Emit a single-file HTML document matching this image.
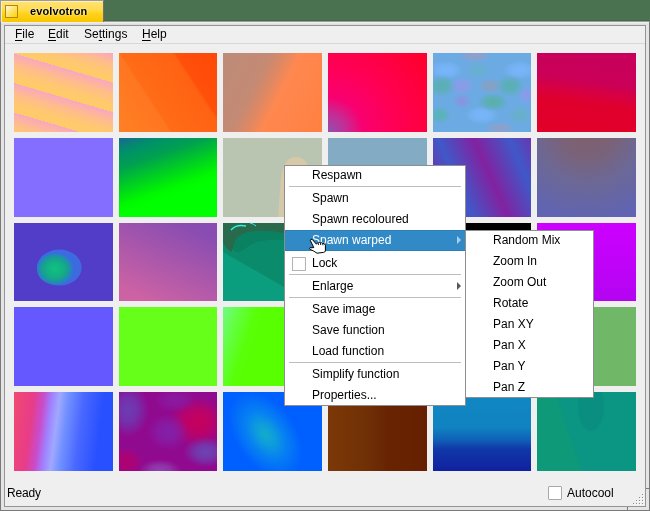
<!DOCTYPE html>
<html><head><meta charset="utf-8">
<style>
html,body{margin:0;padding:0;}
body{width:650px;height:511px;position:relative;overflow:hidden;background:#4a7150;font-family:"Liberation Sans",sans-serif;font-size:12px;color:#000;}
.a{position:absolute;}
.t,.mb,#ttl,#status,#autocool{will-change:transform;}
#tab{left:0;top:0;width:102px;height:21px;border-left:1px solid #9a9a9a;border-top:1px solid #9a9a9a;border-right:1px solid #707070;background:linear-gradient(#ffe27a,#ffdc50 40%,#ffd21c 60%,#f8c600);box-shadow:inset 1px 1px 0 #fff0b0;}
#ticon{left:5px;top:5px;width:11px;height:11px;border:1px solid #b08a00;background:linear-gradient(135deg,#fffbe8 0%,#ffe680 40%,#ffd000 100%);}
#ttl{left:30px;top:4px;font-weight:bold;font-size:11px;line-height:14px;letter-spacing:0.12px;text-shadow:0 0 1px #fffbe0,0 0 2px #fff4b0;}
#frame{left:0;top:21px;width:648px;height:488px;border:1px solid #7a7a7a;border-top-color:#9a9a9a;background:#e4e4e4;}
#inner{left:4px;top:25px;width:640px;height:480px;border:1px solid #949494;background:#efefef;}
.mb{top:28px;line-height:12px;}
.u{text-decoration:underline;text-underline-offset:2px;}
#mbline{left:5px;top:43px;width:640px;height:1px;background:#d8d8d8;}
.t{position:absolute;}
#status{left:7px;top:487px;letter-spacing:-0.2px;line-height:12px;}
#cb{left:548px;top:486px;width:12px;height:12px;border:1px solid #a8a8a8;background:#fff;border-radius:1px;}
#autocool{left:567px;top:487px;line-height:12px;}
.menu{position:absolute;background:#fff;border:1px solid #8e8e8e;}
.mi{position:absolute;left:0;right:0;height:21px;}
.mi span{position:absolute;left:27px;top:4px;line-height:12px;white-space:nowrap;}
.sep{position:absolute;left:4px;right:4px;height:1px;background:#bdbdbd;}
.arr{position:absolute;width:0;height:0;border-left:4px solid #585858;border-top:4px solid transparent;border-bottom:4px solid transparent;}
.mt{left:312px;line-height:12px;white-space:nowrap;}
.st{left:493px;line-height:12px;white-space:nowrap;}
</style></head><body>
<div id="frame" class="a"></div>
<div id="inner" class="a"></div>
<div id="mbline" class="a"></div>
<div class="a" style="left:1px;top:22px;width:648px;height:3px;background:linear-gradient(#f2f2f2,#e4e4e4 50%,#d8d8d8)"></div>
<div class="a" style="left:104px;top:20px;width:546px;height:1px;background:#426a48"></div>
<div id="tab" class="a"></div>
<div id="ticon" class="a"></div>
<div id="ttl" class="a">evolvotron</div>
<div class="a mb" style="left:15px"><span class="u">F</span>ile</div>
<div class="a mb" style="left:48px"><span class="u">E</span>dit</div>
<div class="a mb" style="left:84px">Se<span class="u">t</span>tings</div>
<div class="a mb" style="left:142px"><span class="u">H</span>elp</div>

<!-- tiles -->
<svg class="a" style="left:0;top:0" width="650" height="511" viewBox="0 0 650 511"><defs><linearGradient id="g11" gradientUnits="userSpaceOnUse" x1="14" y1="53.5" x2="5.994204365124997" y2="80.63829028771188" spreadMethod="repeat"><stop offset="0" stop-color="#f6a8c4"/><stop offset="0.1" stop-color="#fbadb0"/><stop offset="0.4" stop-color="#ffbe88"/><stop offset="0.7" stop-color="#ffc870"/><stop offset="1" stop-color="#ffcc66"/></linearGradient><linearGradient id="g12" gradientUnits="userSpaceOnUse" x1="83" y1="76.5" x2="187.7" y2="8.2"><stop offset="0" stop-color="#ff8024"/><stop offset="0.34" stop-color="#ff7620"/><stop offset="0.355" stop-color="#ff6c18"/><stop offset="0.7" stop-color="#ff6212"/><stop offset="0.725" stop-color="#ff500a"/><stop offset="1" stop-color="#ff4808"/></linearGradient><linearGradient id="g13" gradientUnits="userSpaceOnUse" x1="223" y1="53" x2="333.7" y2="109"><stop offset="0" stop-color="#bc8c7a"/><stop offset="0.34" stop-color="#c48a74"/><stop offset="0.46" stop-color="#e08862"/><stop offset="0.56" stop-color="#ff8850"/><stop offset="1" stop-color="#ff8040"/></linearGradient><radialGradient id="g14" gradientUnits="userSpaceOnUse" cx="328" cy="132" r="140" ><stop offset="0" stop-color="#9050b0"/><stop offset="0.12" stop-color="#c03098"/><stop offset="0.25" stop-color="#f80070"/><stop offset="0.45" stop-color="#ff0058"/><stop offset="1" stop-color="#ff0020"/></radialGradient><clipPath id="c15"><rect x="433" y="53" width="98" height="79"/></clipPath><radialGradient id="b1"><stop offset="0" stop-color="#78b6fc" stop-opacity="1.0"/><stop offset="0.45" stop-color="#78b6fc" stop-opacity="0.75"/><stop offset="1" stop-color="#78b6fc" stop-opacity="0"/></radialGradient><radialGradient id="b2"><stop offset="0" stop-color="#78b6fc" stop-opacity="1.0"/><stop offset="0.45" stop-color="#78b6fc" stop-opacity="0.75"/><stop offset="1" stop-color="#78b6fc" stop-opacity="0"/></radialGradient><radialGradient id="b3"><stop offset="0" stop-color="#78b6fc" stop-opacity="1.0"/><stop offset="0.45" stop-color="#78b6fc" stop-opacity="0.75"/><stop offset="1" stop-color="#78b6fc" stop-opacity="0"/></radialGradient><radialGradient id="b4"><stop offset="0" stop-color="#58b0b0" stop-opacity="1.0"/><stop offset="0.45" stop-color="#58b0b0" stop-opacity="0.75"/><stop offset="1" stop-color="#58b0b0" stop-opacity="0"/></radialGradient><radialGradient id="b5"><stop offset="0" stop-color="#58b0b0" stop-opacity="1.0"/><stop offset="0.45" stop-color="#58b0b0" stop-opacity="0.75"/><stop offset="1" stop-color="#58b0b0" stop-opacity="0"/></radialGradient><radialGradient id="b6"><stop offset="0" stop-color="#58b0a8" stop-opacity="1.0"/><stop offset="0.45" stop-color="#58b0a8" stop-opacity="0.75"/><stop offset="1" stop-color="#58b0a8" stop-opacity="0"/></radialGradient><radialGradient id="b7"><stop offset="0" stop-color="#58b4b8" stop-opacity="1.0"/><stop offset="0.45" stop-color="#58b4b8" stop-opacity="0.75"/><stop offset="1" stop-color="#58b4b8" stop-opacity="0"/></radialGradient><radialGradient id="b8"><stop offset="0" stop-color="#68b0c8" stop-opacity="1.0"/><stop offset="0.45" stop-color="#68b0c8" stop-opacity="0.75"/><stop offset="1" stop-color="#68b0c8" stop-opacity="0"/></radialGradient><radialGradient id="b9"><stop offset="0" stop-color="#8c9ae8" stop-opacity="1.0"/><stop offset="0.45" stop-color="#8c9ae8" stop-opacity="0.75"/><stop offset="1" stop-color="#8c9ae8" stop-opacity="0"/></radialGradient><radialGradient id="b10"><stop offset="0" stop-color="#68b0d0" stop-opacity="1.0"/><stop offset="0.45" stop-color="#68b0d0" stop-opacity="0.75"/><stop offset="1" stop-color="#68b0d0" stop-opacity="0"/></radialGradient><radialGradient id="b11"><stop offset="0" stop-color="#8894e0" stop-opacity="1.0"/><stop offset="0.45" stop-color="#8894e0" stop-opacity="0.75"/><stop offset="1" stop-color="#8894e0" stop-opacity="0"/></radialGradient><radialGradient id="b12"><stop offset="0" stop-color="#90a0c8" stop-opacity="1.0"/><stop offset="0.45" stop-color="#90a0c8" stop-opacity="0.75"/><stop offset="1" stop-color="#90a0c8" stop-opacity="0"/></radialGradient><radialGradient id="b13"><stop offset="0" stop-color="#90a0c8" stop-opacity="1.0"/><stop offset="0.45" stop-color="#90a0c8" stop-opacity="0.75"/><stop offset="1" stop-color="#90a0c8" stop-opacity="0"/></radialGradient><radialGradient id="b14"><stop offset="0" stop-color="#8c9ae8" stop-opacity="1.0"/><stop offset="0.45" stop-color="#8c9ae8" stop-opacity="0.75"/><stop offset="1" stop-color="#8c9ae8" stop-opacity="0"/></radialGradient><radialGradient id="b15"><stop offset="0" stop-color="#88a0c0" stop-opacity="1.0"/><stop offset="0.45" stop-color="#88a0c0" stop-opacity="0.75"/><stop offset="1" stop-color="#88a0c0" stop-opacity="0"/></radialGradient><linearGradient id="g16" gradientUnits="userSpaceOnUse" x1="637" y1="53" x2="626.6" y2="132.3"><stop offset="0" stop-color="#c8005c"/><stop offset="0.42" stop-color="#ca0058"/><stop offset="0.58" stop-color="#d80040"/><stop offset="0.72" stop-color="#e0002c"/><stop offset="1" stop-color="#e0002a"/></linearGradient><linearGradient id="g22" gradientUnits="userSpaceOnUse" x1="119" y1="138" x2="145.9" y2="213.4"><stop offset="0" stop-color="#1a6890"/><stop offset="0.18" stop-color="#00906a"/><stop offset="0.36" stop-color="#00a050"/><stop offset="0.6" stop-color="#00d020"/><stop offset="0.8" stop-color="#00f800"/><stop offset="0.9" stop-color="#00ff00"/></linearGradient><linearGradient id="g25" gradientUnits="userSpaceOnUse" x1="438" y1="138" x2="497.7" y2="112" spreadMethod="repeat"><stop offset="0" stop-color="#4058c8"/><stop offset="0.5" stop-color="#8222a0"/><stop offset="1" stop-color="#4058c8"/></linearGradient><radialGradient id="g26" gradientUnits="userSpaceOnUse" cx="587" cy="128" r="92" ><stop offset="0" stop-color="#80606c"/><stop offset="0.3" stop-color="#7a6278"/><stop offset="0.6" stop-color="#6c6896"/><stop offset="1" stop-color="#6064b2"/></radialGradient><radialGradient id="g31" gradientUnits="userSpaceOnUse" cx="55" cy="269" r="17" gradientTransform="translate(55 269) scale(1 0.88) translate(-55 -269)"><stop offset="0" stop-color="#10c280"/><stop offset="0.5" stop-color="#12b084"/><stop offset="0.8" stop-color="#1a9a98"/><stop offset="1" stop-color="#2880c8"/></radialGradient><linearGradient id="g32" gradientUnits="userSpaceOnUse" x1="185" y1="223" x2="150" y2="301"><stop offset="0" stop-color="#884cb2"/><stop offset="1" stop-color="#cc62a4"/></linearGradient><linearGradient id="g36" gradientUnits="userSpaceOnUse" x1="537" y1="223" x2="537" y2="301"><stop offset="0" stop-color="#cc00ff"/><stop offset="1" stop-color="#b404f2"/></linearGradient><linearGradient id="g43" gradientUnits="userSpaceOnUse" x1="223" y1="307" x2="268" y2="322"><stop offset="0" stop-color="#74f888"/><stop offset="0.35" stop-color="#62ff40"/><stop offset="0.7" stop-color="#58ff08"/><stop offset="1" stop-color="#58ff00"/></linearGradient><linearGradient id="g51" gradientUnits="userSpaceOnUse" x1="14" y1="392" x2="113.2" y2="404.6"><stop offset="0" stop-color="#f04a70"/><stop offset="0.2" stop-color="#e83c88"/><stop offset="0.3" stop-color="#c84ccc"/><stop offset="0.38" stop-color="#a080ff"/><stop offset="0.46" stop-color="#a0a8ff"/><stop offset="0.55" stop-color="#7090ff"/><stop offset="0.7" stop-color="#4a68ff"/><stop offset="0.9" stop-color="#2850ff"/></linearGradient><clipPath id="c52"><rect x="119" y="392" width="98" height="79"/></clipPath><radialGradient id="b16"><stop offset="0" stop-color="#c8005c" stop-opacity="1.0"/><stop offset="0.45" stop-color="#c8005c" stop-opacity="0.75"/><stop offset="1" stop-color="#c8005c" stop-opacity="0"/></radialGradient><radialGradient id="b17"><stop offset="0" stop-color="#6c3cb4" stop-opacity="1.0"/><stop offset="0.45" stop-color="#6c3cb4" stop-opacity="0.75"/><stop offset="1" stop-color="#6c3cb4" stop-opacity="0"/></radialGradient><radialGradient id="b18"><stop offset="0" stop-color="#6c44b4" stop-opacity="1.0"/><stop offset="0.45" stop-color="#6c44b4" stop-opacity="0.75"/><stop offset="1" stop-color="#6c44b4" stop-opacity="0"/></radialGradient><radialGradient id="b19"><stop offset="0" stop-color="#b00070" stop-opacity="1.0"/><stop offset="0.45" stop-color="#b00070" stop-opacity="0.75"/><stop offset="1" stop-color="#b00070" stop-opacity="0"/></radialGradient><radialGradient id="b20"><stop offset="0" stop-color="#8420a8" stop-opacity="1.0"/><stop offset="0.45" stop-color="#8420a8" stop-opacity="0.75"/><stop offset="1" stop-color="#8420a8" stop-opacity="0"/></radialGradient><radialGradient id="b21"><stop offset="0" stop-color="#9040b0" stop-opacity="1.0"/><stop offset="0.45" stop-color="#9040b0" stop-opacity="0.75"/><stop offset="1" stop-color="#9040b0" stop-opacity="0"/></radialGradient><radialGradient id="b22"><stop offset="0" stop-color="#8a1aa0" stop-opacity="1.0"/><stop offset="0.45" stop-color="#8a1aa0" stop-opacity="0.75"/><stop offset="1" stop-color="#8a1aa0" stop-opacity="0"/></radialGradient><radialGradient id="g53" gradientUnits="userSpaceOnUse" cx="265.6" cy="434.6" r="48" gradientTransform="translate(265.6 434.6) rotate(55) scale(1 0.62) translate(-265.6 -434.6)"><stop offset="0" stop-color="#14acc8"/><stop offset="0.25" stop-color="#0e9cdc"/><stop offset="0.55" stop-color="#0680f2"/><stop offset="1" stop-color="#0060ff"/></radialGradient><linearGradient id="g54" gradientUnits="userSpaceOnUse" x1="328" y1="392" x2="427" y2="392"><stop offset="0" stop-color="#7c3806"/><stop offset="0.4" stop-color="#703006"/><stop offset="0.6" stop-color="#682402"/><stop offset="1" stop-color="#642000"/></linearGradient><linearGradient id="g55" gradientUnits="userSpaceOnUse" x1="433" y1="392" x2="433" y2="471"><stop offset="0" stop-color="#1088c4"/><stop offset="0.45" stop-color="#1082c0"/><stop offset="0.6" stop-color="#1062b8"/><stop offset="0.72" stop-color="#1038a8"/><stop offset="1" stop-color="#1020a0"/></linearGradient><clipPath id="c56"><rect x="537" y="392" width="99" height="79"/></clipPath></defs><rect x="14" y="53" width="99" height="79" fill="url(#g11)" /><rect x="119" y="53" width="98" height="79" fill="url(#g12)" /><rect x="223" y="53" width="99" height="79" fill="url(#g13)" /><rect x="328" y="53" width="99" height="79" fill="url(#g14)" /><rect x="433" y="53" width="98" height="79" fill="#6caae4" /><g clip-path="url(#c15)"><ellipse cx="446" cy="70" rx="17.6" ry="9.600000000000001" fill="url(#b1)"/><ellipse cx="520" cy="70" rx="17.6" ry="9.600000000000001" fill="url(#b2)"/><ellipse cx="482" cy="115" rx="17.6" ry="9.600000000000001" fill="url(#b3)"/><ellipse cx="442" cy="86" rx="14.4" ry="11.200000000000001" fill="url(#b4)"/><ellipse cx="510" cy="86" rx="14.4" ry="11.200000000000001" fill="url(#b5)"/><ellipse cx="493" cy="102" rx="16.0" ry="9.600000000000001" fill="url(#b6)"/><ellipse cx="440" cy="115" rx="11.200000000000001" ry="9.600000000000001" fill="url(#b7)"/><ellipse cx="520" cy="115" rx="12.8" ry="9.600000000000001" fill="url(#b8)"/><ellipse cx="462" cy="86" rx="12.8" ry="9.600000000000001" fill="url(#b9)"/><ellipse cx="478" cy="70" rx="12.8" ry="9.600000000000001" fill="url(#b10)"/><ellipse cx="462" cy="101" rx="9.600000000000001" ry="8.0" fill="url(#b11)"/><ellipse cx="475" cy="56" rx="16.0" ry="6.4" fill="url(#b12)"/><ellipse cx="500" cy="128" rx="16.0" ry="6.4" fill="url(#b13)"/><ellipse cx="526" cy="95" rx="8.0" ry="9.600000000000001" fill="url(#b14)"/><ellipse cx="490" cy="86" rx="12.8" ry="8.0" fill="url(#b15)"/></g><rect x="537" y="53" width="99" height="79" fill="url(#g16)" /><rect x="14" y="138" width="99" height="79" fill="#846eff" /><rect x="119" y="138" width="98" height="79" fill="url(#g22)" /><rect x="223" y="138" width="99" height="79" fill="#b9c5b1" /><path d="M278 217 L281 178 Q283 157 296 157 Q309 157 311 178 L314 217 Z" fill="#d5c9a9"/><rect x="328" y="138" width="99" height="79" fill="#84abc4" /><rect x="433" y="138" width="98" height="79" fill="url(#g25)" /><rect x="537" y="138" width="99" height="79" fill="url(#g26)" /><rect x="14" y="223" width="99" height="78" fill="#513dc7" /><ellipse cx="59.3" cy="267.6" rx="22.4" ry="18" fill="#3e6ae0"/><ellipse cx="55" cy="269" rx="18" ry="15.5" fill="url(#g31)"/><rect x="119" y="223" width="98" height="78" fill="url(#g32)" /><rect x="223" y="223" width="99" height="78" fill="#0a9e7e" /><path d="M223 223 L284 223 L284 287 L223 252 Z" fill="#0a8c6c"/><path d="M223 223 L284 223 L284 240 Q258 238 246 248 Q240 253 236 252 L223 240 Z" fill="#0a8262"/><path d="M223 223 L284 223 L284 233 Q262 229 248 232 Q236 235 234 244 Q233 250 231 252 Q225 248 223 242 Z" fill="#2a6a4c"/><path d="M231 230 Q236 224 246 226" stroke="#30f0e0" stroke-width="1.3" fill="none"/><path d="M250 223 Q254 224 256 226" stroke="#30f0e0" stroke-width="1" fill="none"/><rect x="328" y="223" width="99" height="78" fill="#808080" /><rect x="433" y="223" width="98" height="78" fill="#000000" /><rect x="537" y="223" width="99" height="78" fill="url(#g36)" /><rect x="14" y="307" width="99" height="79" fill="#6558ff" /><rect x="119" y="307" width="98" height="79" fill="#66ff1a" /><rect x="223" y="307" width="99" height="79" fill="url(#g43)" /><rect x="328" y="307" width="99" height="79" fill="#808080" /><rect x="433" y="307" width="98" height="79" fill="#808080" /><rect x="537" y="307" width="99" height="79" fill="#70b868" /><rect x="14" y="392" width="99" height="79" fill="url(#g51)" /><rect x="119" y="392" width="98" height="79" fill="#900a90" /><g clip-path="url(#c52)"><ellipse cx="198" cy="422" rx="30.0" ry="25.5" fill="url(#b16)"/><ellipse cx="128" cy="410" rx="21.0" ry="27.0" fill="url(#b17)"/><ellipse cx="206" cy="452" rx="22.5" ry="15.0" fill="url(#b18)"/><ellipse cx="126" cy="462" rx="18.0" ry="15.0" fill="url(#b19)"/><ellipse cx="168" cy="432" rx="21.0" ry="18.0" fill="url(#b20)"/><ellipse cx="160" cy="470" rx="21.0" ry="10.5" fill="url(#b21)"/><ellipse cx="175" cy="400" rx="21.0" ry="12.0" fill="url(#b22)"/></g><rect x="223" y="392" width="99" height="79" fill="url(#g53)" /><rect x="328" y="392" width="99" height="79" fill="url(#g54)" /><rect x="433" y="392" width="98" height="79" fill="url(#g55)" /><rect x="537" y="392" width="99" height="79" fill="#0a9682" /><path d="M537 392 L554.8 392 L581.3 471 L537 471 Z" fill="#0e9a78"/><ellipse cx="591" cy="406" rx="13" ry="25" fill="#0a8e80" clip-path="url(#c56)"/></svg>

<div class="a" style="left:642px;top:494px;width:1px;height:1px;background:#8e8e8e;box-shadow:1px 1px 0 #fff"></div><div class="a" style="left:639px;top:497px;width:1px;height:1px;background:#8e8e8e;box-shadow:1px 1px 0 #fff"></div><div class="a" style="left:642px;top:497px;width:1px;height:1px;background:#8e8e8e;box-shadow:1px 1px 0 #fff"></div><div class="a" style="left:636px;top:500px;width:1px;height:1px;background:#8e8e8e;box-shadow:1px 1px 0 #fff"></div><div class="a" style="left:639px;top:500px;width:1px;height:1px;background:#8e8e8e;box-shadow:1px 1px 0 #fff"></div><div class="a" style="left:642px;top:500px;width:1px;height:1px;background:#8e8e8e;box-shadow:1px 1px 0 #fff"></div><div class="a" style="left:633px;top:503px;width:1px;height:1px;background:#8e8e8e;box-shadow:1px 1px 0 #fff"></div><div class="a" style="left:636px;top:503px;width:1px;height:1px;background:#8e8e8e;box-shadow:1px 1px 0 #fff"></div><div class="a" style="left:639px;top:503px;width:1px;height:1px;background:#8e8e8e;box-shadow:1px 1px 0 #fff"></div><div class="a" style="left:642px;top:503px;width:1px;height:1px;background:#8e8e8e;box-shadow:1px 1px 0 #fff"></div><div class="a" style="left:646px;top:488px;width:3px;height:1px;background:#7a7a7a"></div><div class="a" style="left:627px;top:507px;width:1px;height:3px;background:#7a7a7a"></div>
<div id="status" class="a">Ready</div>
<div id="cb" class="a"></div>
<div id="autocool" class="a">Autocool</div>

<div class="menu" style="left:284px;top:165px;width:180px;height:239px;"></div>
<div class="a" style="left:285px;top:230px;width:180px;height:19px;background:#318ac6;border-top:1px solid #2c7fba;border-bottom:1px solid #2c7fba;"></div>
<div class="sep" style="left:289px;top:186px;width:172px;"></div>
<div class="sep" style="left:289px;top:274px;width:172px;"></div>
<div class="sep" style="left:289px;top:297px;width:172px;"></div>
<div class="sep" style="left:289px;top:362px;width:172px;"></div>
<div class="t mt" style="top:169px">Respawn</div>
<div class="t mt" style="top:192px">Spawn</div>
<div class="t mt" style="top:213px">Spawn recoloured</div>
<div class="t mt" style="top:234px;color:#fff">Spawn warped</div>
<div class="t mt" style="top:257px">Lock</div>
<div class="t mt" style="top:280px">Enlarge</div>
<div class="t mt" style="top:303px">Save image</div>
<div class="t mt" style="top:324px">Save function</div>
<div class="t mt" style="top:345px">Load function</div>
<div class="t mt" style="top:368px">Simplify function</div>
<div class="t mt" style="top:389px">Properties...</div>
<div class="a" style="left:292px;top:257px;width:12px;height:12px;border:1px solid #b4b4b4;background:#fff;"></div>
<div class="arr" style="left:457px;top:236px;border-left-color:#a8cff0;"></div>
<div class="arr" style="left:457px;top:282px;"></div>
<svg class="a" style="left:300px;top:230px" width="40" height="30" viewBox="300 230 40 30"><path d="M310.2 240.2 Q310.8 238.8 312.2 239.4 L316.4 244.2 Q316.8 242.6 318.2 242.9 Q319.2 241.9 320.4 242.8 Q321.8 242.4 322.6 243.4 Q324.8 243.2 325.4 245.2 L325.4 251 Q325 252.2 323.6 252.4 L317 253.2 L313.6 251 L310.2 249.4 Q309 248.6 309.8 247.8 L313.8 247.6 L310.2 240.2 Z" fill="#fff" stroke="#000" stroke-width="1" stroke-linejoin="round"/><path d="M318.3 243.2 L318.5 245 M320.5 243 L320.7 245 M322.7 243.5 L322.9 245.3" stroke="#000" stroke-width="0.9" fill="none"/></svg>
<div class="menu" style="left:465px;top:230px;width:127px;height:166px;"></div>
<div class="t st" style="top:234px">Random Mix</div>
<div class="t st" style="top:255px">Zoom In</div>
<div class="t st" style="top:276px">Zoom Out</div>
<div class="t st" style="top:297px">Rotate</div>
<div class="t st" style="top:318px">Pan XY</div>
<div class="t st" style="top:339px">Pan X</div>
<div class="t st" style="top:360px">Pan Y</div>
<div class="t st" style="top:381px">Pan Z</div>
</body></html>
